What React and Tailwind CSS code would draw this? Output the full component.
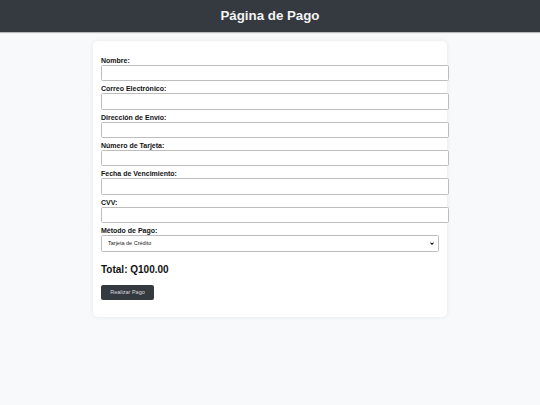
import React from "react";

const fields = [
  "Nombre:",
  "Correo Electrónico:",
  "Dirección de Envío:",
  "Número de Tarjeta:",
  "Fecha de Vencimiento:",
  "CVV:",
];

export default function App() {
  return (
    <div className="min-h-[405px] bg-[#f8f9fa] font-['Liberation_Sans',Arial,sans-serif] text-[#222]">
      <header className="h-[32px] bg-[#343a40] flex items-center justify-center shadow-[0_1px_1px_rgba(0,0,0,0.25)]">
        <h1 className="text-[13.3px] font-bold text-[#f4f4f4] leading-none">Página de Pago</h1>
      </header>
      <main className="flex justify-center pt-[9px]">
        <div className="w-[354px] bg-white rounded-[5px] shadow-[0_0_5px_rgba(0,0,0,0.08)] px-[8px] pt-[16px] pb-[17px]">
          <form className="flex flex-col">
            {fields.map((f) => (
              <div key={f} className="flex flex-col mb-[4px]">
                <label className="block text-[7px] leading-[8px] font-bold text-[#111]">{f}</label>
                <input
                  type="text"
                  className="w-[348px] h-[16.33px] border border-[#bdbdbd] rounded-[1.5px] bg-white outline-none"
                />
              </div>
            ))}
            <div className="flex flex-col">
              <label className="block text-[7px] leading-[8px] font-bold text-[#111]">Método de Pago:</label>
              <div className="relative w-[338px] h-[17px] border border-[#bdbdbd] rounded-[1.5px] bg-white flex items-center">
                <span className="pl-[6px] text-[5.5px] text-[#222]">Tarjeta de Crédito</span>
                <svg className="absolute right-[4px] top-[6.5px]" width="4" height="3" viewBox="0 0 4 3">
                  <path d="M0.5 0.6 L2 2.3 L3.5 0.6" fill="none" stroke="#222" strokeWidth="1.1" />
                </svg>
              </div>
            </div>
            <div className="mt-[12.5px] text-[10px] leading-[11.5px] font-bold text-[#111]">Total: Q100.00</div>
            <div className="mt-[9px]">
              <button
                type="button"
                className="h-[15px] w-[53px] bg-[#343a40] rounded-[2px] text-[5.5px] text-[#d8d8d8] flex items-center justify-center"
              >
                Realizar Pago
              </button>
            </div>
          </form>
        </div>
      </main>
    </div>
  );
}
